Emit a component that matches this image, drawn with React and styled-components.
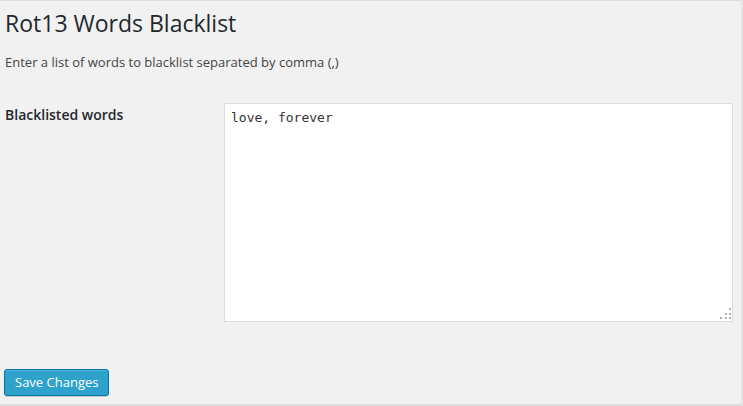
import React from "react";
import styled, { createGlobalStyle } from "styled-components";

const Global = createGlobalStyle`
  body {
    margin: 0;
    background: #f1f1f1;
    font-family: "Open Sans", "Noto Sans", sans-serif;
    color: #444;
  }
`;

const Wrap = styled.div`
  box-sizing: border-box;
  width: 743px;
  height: 406px;
  background: #f1f1f1;
  border-top: 1px solid #dcdcdc;
  border-right: 2px solid #e4e4e4;
  border-bottom: 2px solid #dcdcdc;
  padding: 0 0 0 5px;
  display: flex;
  flex-direction: column;
`;

const Title = styled.h2`
  margin: 8px 0 0 0;
  font-size: 23px;
  font-weight: 400;
  line-height: 29px;
  color: #23282d;
`;

const Intro = styled.p`
  margin: 15px 0 0 0;
  font-size: 13px;
  line-height: 1.5;
  color: #444;
`;

const FormRow = styled.div`
  display: grid;
  grid-template-columns: 219px 509px;
  margin-top: 30px;
`;

const Label = styled.label`
  font-size: 14px;
  font-weight: 600;
  color: #23282d;
  line-height: 1.3;
  padding-top: 3px;
`;

const AreaBox = styled.div`
  position: relative;
  width: 509px;
  height: 219px;
`;

const Area = styled.textarea`
  display: block;
  box-sizing: border-box;
  width: 100%;
  height: 100%;
  margin: 0;
  border: 1px solid #ddd;
  background: #fff;
  padding: 5px 6px;
  font-family: Consolas, "DejaVu Sans Mono", monospace;
  font-size: 13px;
  line-height: 17px;
  color: #333;
  resize: none;
  outline: none;
`;

const Grip = styled.svg`
  position: absolute;
  right: 1px;
  bottom: 2px;
  width: 12px;
  height: 12px;
  pointer-events: none;
`;

const Footer = styled.div`
  margin-top: 47px;
`;

const Button = styled.button`
  box-sizing: border-box;
  height: 27px;
  padding: 0 10px 1px;
  margin-left: -1px;
  background: #2ea2cc;
  border: 1px solid #0074a2;
  border-radius: 3px;
  box-shadow: inset 0 1px 0 rgba(120, 200, 230, 0.5), 0 1px 0 rgba(0, 0, 0, 0.15);
  color: #fff;
  font-family: "Open Sans", "Noto Sans", sans-serif;
  font-size: 13px;
  line-height: 24px;
  cursor: pointer;
`;

const dots = [
  [9, 0],
  [5, 5],
  [9, 5],
  [0, 9],
  [5, 9],
  [9, 9],
];

export default function App() {
  return (
    <>
      <Global />
      <Wrap>
        <Title>Rot13 Words Blacklist</Title>
        <Intro>Enter a list of words to blacklist separated by comma (,)</Intro>
        <FormRow>
          <Label htmlFor="rot13-words">Blacklisted words</Label>
          <AreaBox>
            <Area id="rot13-words" defaultValue="love, forever" />
            <Grip viewBox="0 0 12 12">
              {dots.map(([x, y]) => (
                <rect key={`${x}-${y}`} x={x} y={y} width="2" height="2" fill="#b0b0b0" />
              ))}
            </Grip>
          </AreaBox>
        </FormRow>
        <Footer>
          <Button type="button">Save Changes</Button>
        </Footer>
      </Wrap>
    </>
  );
}
